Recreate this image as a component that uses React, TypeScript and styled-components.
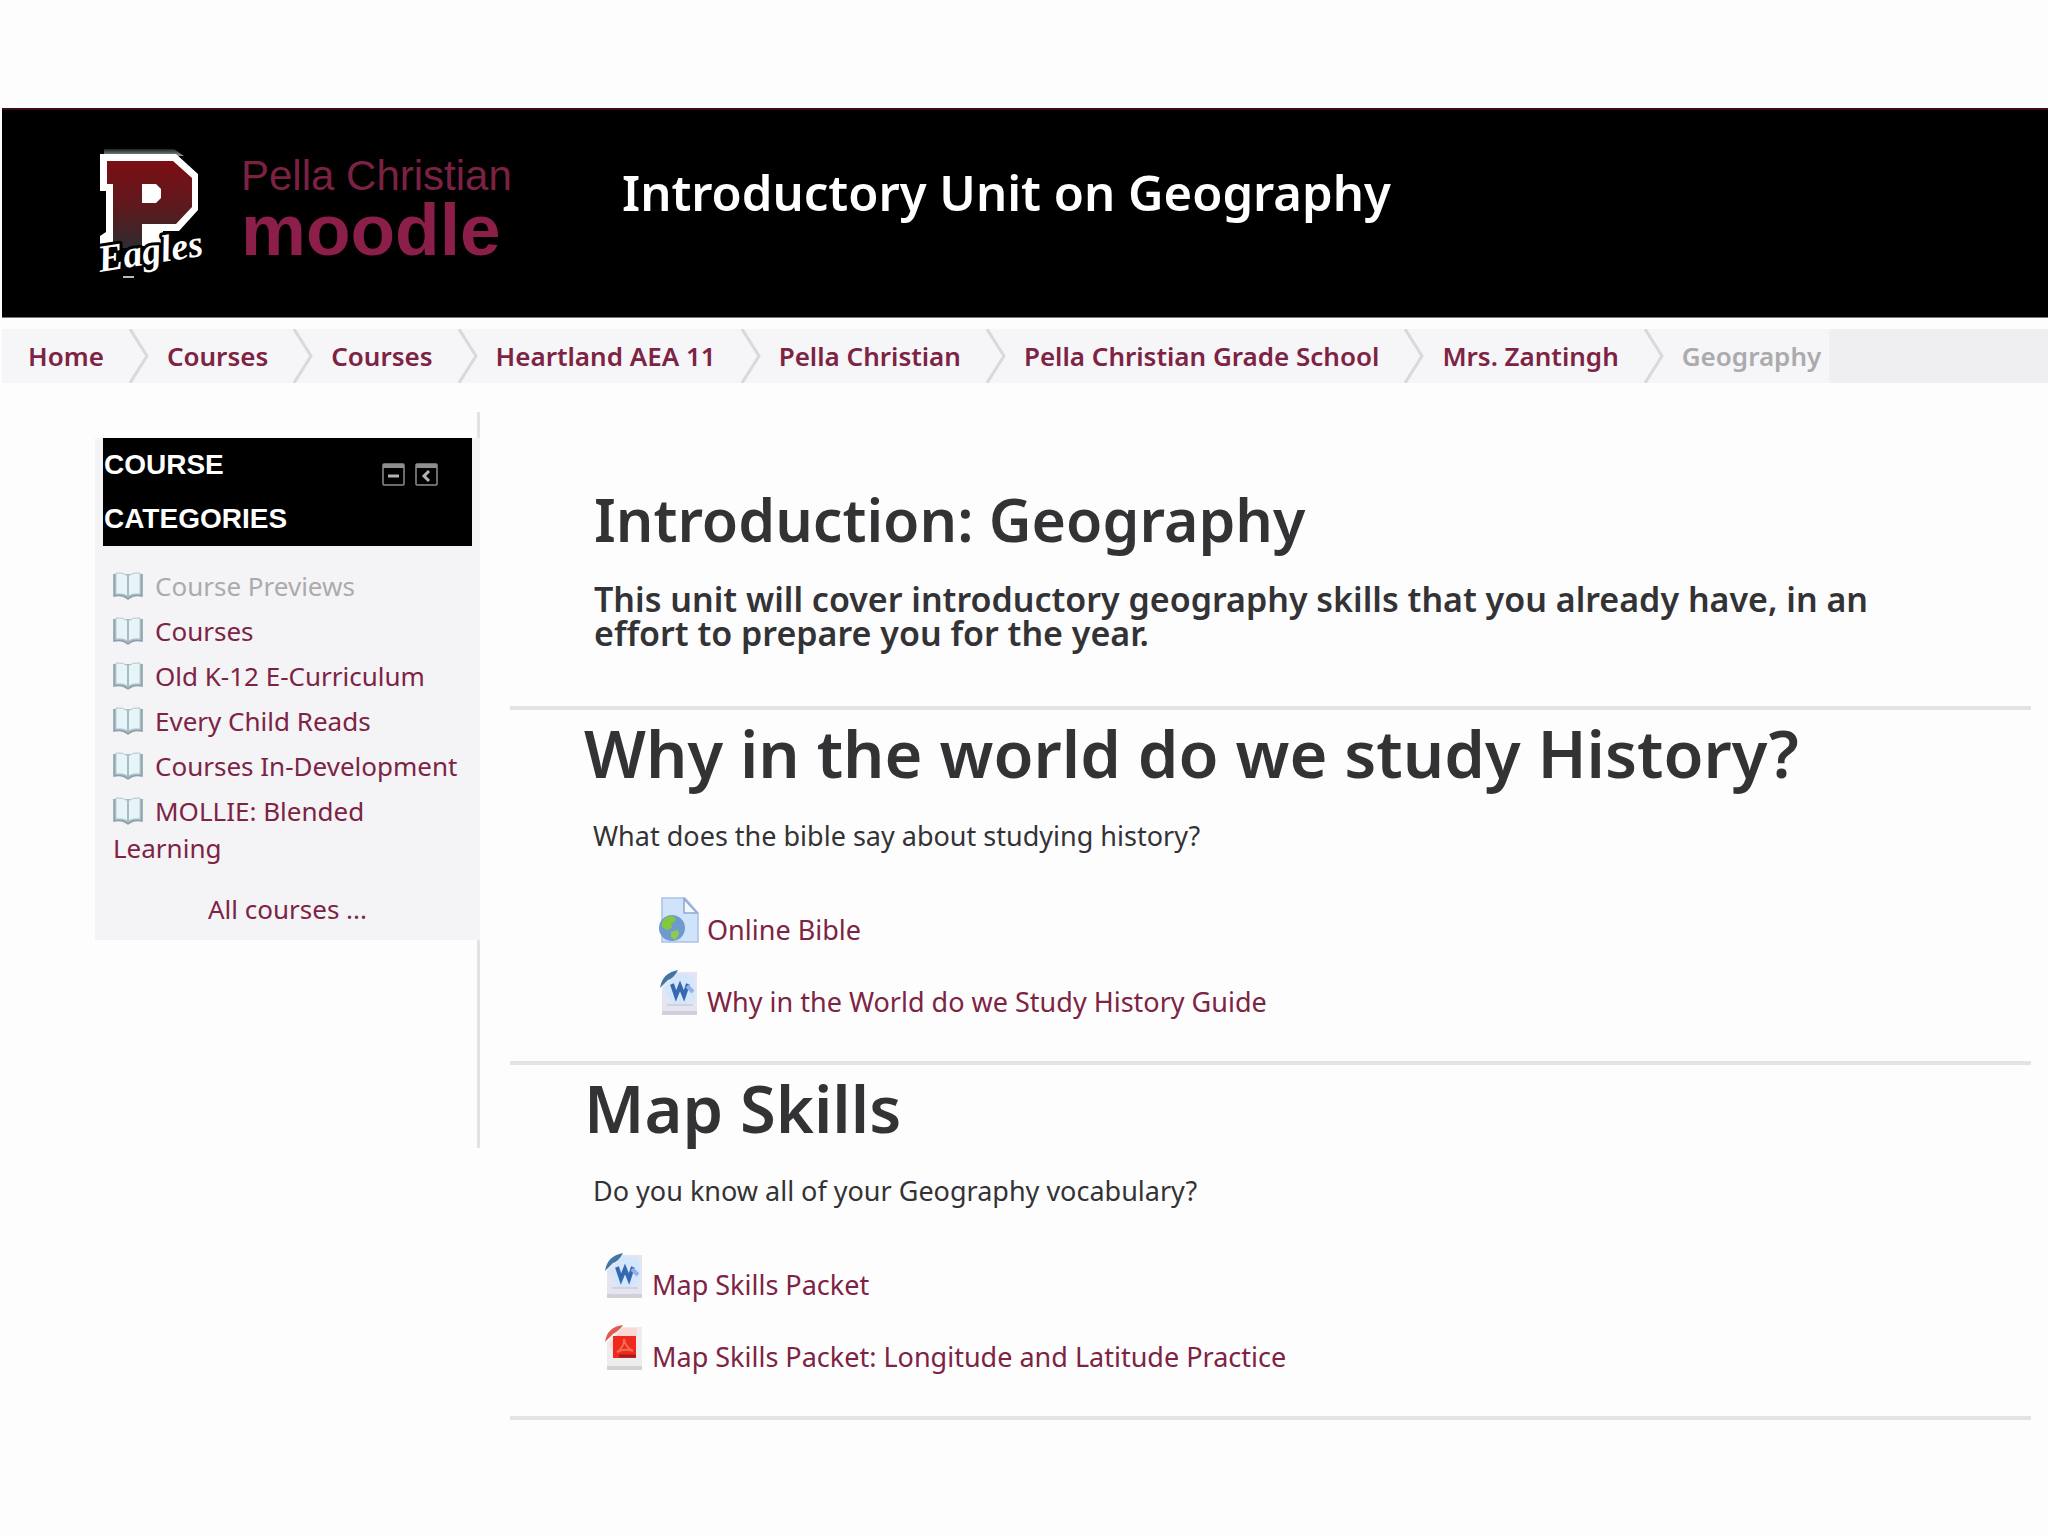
import React from 'react';
import styled, { createGlobalStyle } from 'styled-components';

const sans = '"Noto Sans", "Open Sans", sans-serif';
const helvetica = '"Liberation Sans", Arial, sans-serif';

const color = {
  maroon: '#7d2343',
  ink: '#333335',
  rule: '#e4e2e7',
  panel: '#f4f4f7',
  muted: '#ababad',
};

const GlobalStyle = createGlobalStyle`
  *, *::before, *::after { box-sizing: border-box; }
  body { margin: 0; background: #fefdfe; color: ${color.ink}; font-family: ${sans}; font-size: 27px; line-height: 38px; }
  h1, h2, h3, p, ul, ol { margin: 0; padding: 0; }
  ul, ol { list-style: none; }
  svg { flex: none; }
`;

const Page = styled.div`
  padding: 108px 0 0 2px;
`;

const Header = styled.header`
  display: grid;
  grid-template-columns: 620px 1fr;
  min-height: 210px;
  background: #000;
  border-top: 2px solid #3a0d18;
  border-bottom: 1px solid #77757a;
`;

const Brand = styled.a`
  display: flex;
  gap: 39px;
  padding: 38px 0 0 94px;
  text-decoration: none;
`;

const BrandText = styled.span`
  display: flex;
  flex-direction: column;
  padding-top: 4px;
  font-family: ${helvetica};
`;

const SchoolName = styled.span`
  color: #7b2242;
  font-size: 42px;
  line-height: 48px;
`;

const ProductName = styled.span`
  color: #8c1f49;
  font-size: 73px;
  font-weight: 700;
  line-height: 60px;
`;

const CourseTitle = styled.h1`
  padding-top: 50px;
  color: #fff;
  font-size: 49px;
  font-weight: 600;
  line-height: 64px;
`;

const Crumbs = styled.nav`
  display: flex;
  margin-top: 11px;
  background: #efeef1;
`;

const CrumbList = styled.ol`
  display: flex;
  padding: 0 8px 0 26px;
  background: #f6f5f8;
`;

const Crumb = styled.li`
  display: flex;
  align-items: center;
  height: 54px;
  color: ${color.muted};
  font-size: 26px;
  font-weight: 600;
  white-space: nowrap;
`;

const CrumbLink = styled.a`
  color: ${color.maroon};
  text-decoration: none;
`;

const Chevron = styled.svg`
  width: 20px;
  height: 54px;
  margin: 0 18px 0 25px;
`;

const Columns = styled.div`
  display: grid;
  grid-template-columns: 385px 1fr;
  column-gap: 30px;
  align-items: start;
  padding: 29px 17px 60px 93px;
`;

const Side = styled.aside`
  padding: 26px 0 208px;
  border-right: 3px solid ${color.rule};
`;

const Block = styled.section`
  margin-right: -3px;
  padding-bottom: 12px;
  background: ${color.panel};
`;

const BlockHead = styled.div`
  display: flex;
  justify-content: space-between;
  align-items: flex-start;
  margin: 0 8px;
  padding: 0 34px 0 1px;
  background: #000;
`;

const BlockTitle = styled.h2`
  color: #fff;
  font-family: ${helvetica};
  font-size: 28px;
  font-weight: 700;
  line-height: 54px;
  text-transform: uppercase;
`;

const BlockActions = styled.div`
  display: flex;
  gap: 10px;
  padding-top: 25px;
`;

const IconButton = styled.button`
  display: flex;
  padding: 0;
  border: 0;
  background: none;
`;

const Categories = styled.ul`
  display: flex;
  flex-direction: column;
  gap: 8px;
  padding: 22px 8px 24px 18px;
`;

const Category = styled.a<{ $muted?: boolean }>`
  color: ${(p) => (p.$muted ? color.muted : color.maroon)};
  display: block;
  font-size: 26px;
  line-height: 37px;
  text-decoration: none;

  svg { margin-right: 12px; vertical-align: -4px; }
`;

const AllCourses = styled(Category)`
  text-align: center;
`;

const Main = styled.main`
  min-width: 0;
`;

const Intro = styled.section`
  padding: 70px 100px 56px 84px;
  border-bottom: 4px solid ${color.rule};
`;

const IntroTitle = styled.h2`
  font-size: 59px;
  font-weight: 600;
  line-height: 74px;
`;

const IntroText = styled.h3`
  padding-top: 26px;
  font-size: 34px;
  font-weight: 600;
  line-height: 34px;
`;

const Topic = styled.section`
  padding: 0 0 44px 74px;
  border-bottom: 4px solid ${color.rule};
`;

const TopicTitle = styled.h2`
  font-size: 65px;
  font-weight: 600;
  line-height: 86px;
`;

const Summary = styled.p`
  padding: 21px 0 42px 9px;
`;

const Activities = styled.ul<{ $indent: number }>`
  display: flex;
  flex-direction: column;
  gap: 24px;
  padding-left: ${(p) => p.$indent}px;
`;

const Activity = styled.a`
  display: inline-flex;
  align-items: flex-end;
  gap: 8px;
  height: 48px;
  color: ${color.maroon};
  line-height: 30px;
  text-decoration: none;
`;

const ActivityItem = styled.li`
  display: flex;
`;

const CrestSvg = styled.svg`
  width: 106px;
  height: 132px;
  overflow: visible;
`;

function Crest() {
  return (
    <CrestSvg viewBox="0 0 106 132" role="img" aria-label="Eagles">
      <defs>
        <linearGradient id="crest" x1="0" y1="0" x2="0" y2="1">
          <stop offset="0" stopColor="#7c0e14" />
          <stop offset="0.55" stopColor="#5c1a1e" />
          <stop offset="1" stopColor="#2e2c2e" />
        </linearGradient>
        <linearGradient id="crestTop" x1="0" y1="0" x2="0" y2="1">
          <stop offset="0" stopColor="#1c2422" />
          <stop offset="1" stopColor="#8d9895" />
        </linearGradient>
      </defs>
      <path d="M8 7V1H78L88 8Z" fill="url(#crestTop)" />
      <path d="M4 6H80L102 26V62L83 83H67V98H4V88L10 84V43H4Z" fill="#fff" />
      <path d="M11 13H77L96 30V59L80 76H46V100H17V36H11Z" fill="url(#crest)" />
      <path d="M46 36H60L65 41V50L60 55H46Z" fill="#fff" />
      <text
        x="4"
        y="124"
        transform="rotate(-9 4 124)"
        fontFamily='"Liberation Serif", serif'
        fontSize="38"
        fontStyle="italic"
        fontWeight="700"
        fill="#fff"
        stroke="#000"
        strokeWidth="6"
        strokeLinejoin="round"
        paintOrder="stroke"
      >
        Eagles
      </text>
      <path d="M27 129H38" stroke="#bbb" strokeWidth="2" fill="none" />
    </CrestSvg>
  );
}

function CollapseIcon({ dock }: { dock?: boolean }) {
  return (
    <svg width="23" height="24" viewBox="0 0 23 24" fill="none" stroke="#8f8d90" aria-hidden="true">
      <rect x="1" y="1" width="21" height="21" rx="1" strokeWidth="1.5" />
      <path d="M1 3H22" strokeWidth="4" />
      <path d={dock ? 'M14 8L9 13L14 18' : 'M6 13H17'} stroke="#b5b3b6" strokeWidth="3" />
    </svg>
  );
}

function BookIcon() {
  return (
    <svg width="30" height="28" viewBox="0 0 30 28" aria-hidden="true">
      <path d="M1 2V24Q9 22 15 27Q21 22 29 24V2" fill="#a3b6bf" stroke="#8b9fa9" strokeWidth="1.5" />
      <path d="M3 1Q10 0 15 4V24Q10 21 3 22Z" fill="#e6f5f8" stroke="#b5c6cd" />
      <path d="M27 1Q20 0 15 4V24Q20 21 27 22Z" fill="#e6f5f8" stroke="#b5c6cd" />
      <path d="M15 4V24" stroke="#a9bcc4" strokeWidth="2" />
    </svg>
  );
}

function WebIcon() {
  return (
    <svg width="40" height="48" viewBox="0 0 40 48" aria-hidden="true">
      <path d="M3 1H26L39 16V45H3Z" fill="#cfe3fa" stroke="#a9c1e6" strokeWidth="1.5" />
      <path d="M25 2V16H38Z" fill="#f3f8fe" stroke="#8fa9cf" strokeWidth="1.5" />
      <circle cx="13" cy="31" r="13" fill="#6e9bcb" />
      <path d="M3 25Q7 18 14 19L17 23L12 27L13 31L8 33L3 30Z" fill="#86c83c" />
      <path d="M12 35L19 33L20 37L16 43L12 40Z" fill="#8ecb4a" />
    </svg>
  );
}

function WordIcon() {
  return (
    <svg width="40" height="48" viewBox="0 0 40 48" aria-hidden="true">
      <path d="M3 18L17 3H38V45H3Z" fill="#e4e5f0" />
      <path d="M3 42H38V46H3Z" fill="#d0d0d6" />
      <path d="M5 20L18 5H32L36 12V30L28 35H14Z" fill="#d3e6fc" />
      <path d="M1 19Q3 4 19 1Q15 9 9 11Q6 14 1 19Z" fill="#4077a5" />
      <path d="M13 15L17 27L21 17L25 27L29 15" fill="none" stroke="#3568b0" strokeWidth="4" />
      <path d="M28 17L34 23" stroke="#94aeea" strokeWidth="4" />
      <path d="M8 36H34" stroke="#bcbfd0" strokeWidth="1" />
    </svg>
  );
}

function PdfIcon() {
  return (
    <svg width="40" height="48" viewBox="0 0 40 48" aria-hidden="true">
      <path d="M3 18L17 3H38V45H3Z" fill="#ededef" />
      <path d="M3 42H38V46H3Z" fill="#d3d2d3" />
      <path d="M5 20L18 4H33V12L10 30Z" fill="#fbd9d3" />
      <path d="M1 18Q3 3 19 1Q15 7 9 10Q6 13 1 18Z" fill="#dd5c4f" />
      <path d="M9 12H32V34H9Z" fill="#f0281e" />
      <path d="M13 28Q20 24 20 15Q22 24 29 27Q21 24 13 28Z" fill="none" stroke="#f5694f" strokeWidth="2" />
      <path d="M15 32H32" stroke="#a01f1a" strokeWidth="3" />
    </svg>
  );
}

const trail = [
  'Home',
  'Courses',
  'Courses',
  'Heartland AEA 11',
  'Pella Christian',
  'Pella Christian Grade School',
  'Mrs. Zantingh',
];

const categories = [
  { name: 'Course Previews', muted: true },
  { name: 'Courses' },
  { name: 'Old K-12 E-Curriculum' },
  { name: 'Every Child Reads' },
  { name: 'Courses In-Development' },
  { name: 'MOLLIE: Blended Learning' },
];

const topics = [
  {
    title: 'Why in the world do we study History?',
    summary: 'What does the bible say about studying history?',
    indent: 75,
    activities: [
      { Icon: WebIcon, name: 'Online Bible' },
      { Icon: WordIcon, name: 'Why in the World do we Study History Guide' },
    ],
  },
  {
    title: 'Map Skills',
    summary: 'Do you know all of your Geography vocabulary?',
    indent: 20,
    activities: [
      { Icon: WordIcon, name: 'Map Skills Packet' },
      { Icon: PdfIcon, name: 'Map Skills Packet: Longitude and Latitude Practice' },
    ],
  },
];

export default function App() {
  return (
    <Page>
      <GlobalStyle />
      <Header>
        <Brand href="#">
          <Crest />
          <BrandText>
            <SchoolName>Pella Christian</SchoolName>
            <ProductName>moodle</ProductName>
          </BrandText>
        </Brand>
        <CourseTitle>Introductory Unit on Geography</CourseTitle>
      </Header>

      <Crumbs aria-label="Breadcrumb">
        <CrumbList>
          {trail.map((name, i) => (
            <Crumb key={i}>
              <CrumbLink href="#">{name}</CrumbLink>
              <Chevron viewBox="0 0 20 54" fill="none" stroke="#dad8dc" strokeWidth="3" aria-hidden="true">
                <path d="M1 0L18 27L1 54" />
              </Chevron>
            </Crumb>
          ))}
          <Crumb aria-current="page">Geography</Crumb>
        </CrumbList>
      </Crumbs>

      <Columns>
        <Side>
          <Block>
            <BlockHead>
              <BlockTitle>Course categories</BlockTitle>
              <BlockActions>
                <IconButton type="button" aria-label="Hide block">
                  <CollapseIcon />
                </IconButton>
                <IconButton type="button" aria-label="Dock block">
                  <CollapseIcon dock />
                </IconButton>
              </BlockActions>
            </BlockHead>
            <Categories>
              {categories.map((c) => (
                <li key={c.name}>
                  <Category href="#" $muted={c.muted}>
                    <BookIcon />
                    {c.name}
                  </Category>
                </li>
              ))}
            </Categories>
            <AllCourses href="#">All courses ...</AllCourses>
          </Block>
        </Side>

        <Main>
          <Intro>
            <IntroTitle>Introduction: Geography</IntroTitle>
            <IntroText>
              This unit will cover introductory geography skills that you already have, in an effort to
              prepare you for the year.
            </IntroText>
          </Intro>
          {topics.map((t) => (
            <Topic key={t.title}>
              <TopicTitle>{t.title}</TopicTitle>
              <Summary>{t.summary}</Summary>
              <Activities $indent={t.indent}>
                {t.activities.map(({ Icon, name }) => (
                  <ActivityItem key={name}>
                    <Activity href="#">
                      <Icon />
                      {name}
                    </Activity>
                  </ActivityItem>
                ))}
              </Activities>
            </Topic>
          ))}
        </Main>
      </Columns>
    </Page>
  );
}
